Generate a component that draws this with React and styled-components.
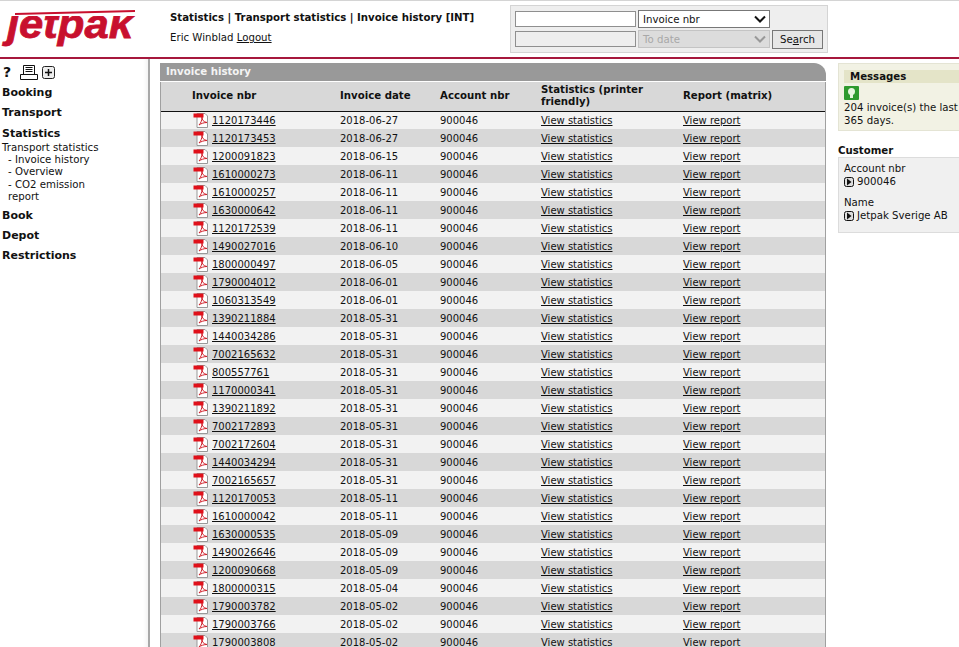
import styled, { createGlobalStyle } from 'styled-components'

const GlobalStyle = createGlobalStyle`
html, body {
  margin: 0;
  padding: 0;
  height: 647px;
  overflow: hidden;
  background: #fff;
}
body {
  font-family: "DejaVu Sans", Verdana, sans-serif;
  font-size: 10px;
  color: #111;
}
a {
  color: #111;
}
`
const Page = styled.div`
  width: 959px;
  height: 647px;
  overflow: hidden;
  display: flex;
  flex-direction: column;
`
const Header = styled.header`
  flex-shrink: 0;
  display: flex;
  box-sizing: border-box;
  border-top: 1px solid #d4d4d4;
  border-bottom: 2px solid #a6183c;
  height: 59px;
`
const LogoBox = styled.div`
  width: 170px;
  flex-shrink: 0;
`
const HeadText = styled.div`
  width: 340px;
  padding-top: 10px;
  box-sizing: border-box;
`
const Crumb = styled.div`
  font-weight: bold;
  font-size: 10.2px;
  line-height: 13px;
`
const UserLine = styled.div`
  margin-top: 7px;
  line-height: 13px;
  font-size: 10.2px;
`
const SearchBox = styled.form`
  margin-top: 4px;
  width: 318px;
  height: 48px;
  box-sizing: border-box;
  background: #eeeeee;
  border: 1px solid #d4d4d4;
  padding: 4px;
  display: grid;
  grid-template-columns: 121px 132px 51px;
  grid-template-rows: 18px 18px;
  column-gap: 2px;
  row-gap: 2px;
  align-items: center;
`
const TextField = styled.input`
  box-sizing: border-box;
  width: 121px;
  height: 16px;
  margin: 0;
  padding: 0 3px;
  border: 1px solid #8f8f8f;
  background: ${p => (p.disabled ? '#eeeeee' : '#fff')};
`
const FakeSelect = styled.div`
  box-sizing: border-box;
  width: 132px;
  height: 18px;
  border: 1px solid ${p => (p.$off ? '#c4c4c4' : '#777')};
  background: ${p => (p.$off ? '#dcdcdc' : '#fff')};
  color: ${p => (p.$off ? '#a8a8a8' : '#111')};
  display: flex;
  align-items: center;
  justify-content: space-between;
  padding: 0 3px 0 4px;
  font-size: 10.2px;
`
const SearchButton = styled.button`
  box-sizing: border-box;
  width: 51px;
  height: 19px;
  margin: 0;
  padding: 0;
  border: 1px solid #777;
  background: #e6e6e6;
  font: inherit;
  font-size: 10.2px;
  color: #111;
  u {
    text-decoration: underline;
  }
`
const Body = styled.div`
  flex: 1;
  display: flex;
  min-height: 0;
`
const Side = styled.nav`
  width: 150px;
  flex-shrink: 0;
  box-sizing: border-box;
  border-right: 2px solid #a8a8a8;
  box-shadow: inset -6px 0 4px -4px #f2f2f2;
  padding: 6px 0 0 2px;
`
const Tools = styled.div`
  display: flex;
  align-items: center;
  height: 15px;
  margin-bottom: 6px;
  gap: 4px;
`
const Help = styled.span`
  font-weight: bold;
  font-size: 14px;
  width: 14px;
  line-height: 15px;
  padding-left: 1px;
  box-sizing: border-box;
`
const NavHead = styled.div`
  font-weight: bold;
  font-size: 11px;
  line-height: 14px;
  margin-bottom: ${p => (p.$gap ? p.$gap : 6)}px;
`
const SubList = styled.div`
  font-size: 10.2px;
  line-height: 12.2px;
  margin: -5px 0 6px;
`
const SubItem = styled.div`
  padding-left: ${p => (p.$plain ? '0' : '6px')};
`
const Main = styled.main`
  width: 666px;
  margin-left: 10px;
  padding-top: 4px;
  flex-shrink: 0;
`
const PanelTitle = styled.div`
  height: 18px;
  background: #999999;
  color: #f4f4f4;
  font-weight: bold;
  font-size: 10.2px;
  line-height: 18px;
  padding-left: 6px;
  border-radius: 0 12px 0 0;
`
const TableWrap = styled.div`
  border-left: 1px solid #a0a0a0;
  border-right: 1px solid #a0a0a0;
  margin-top: 1px;
`
const Table = styled.table`
  width: 664px;
  table-layout: fixed;
  border-collapse: collapse;
  font-size: 10px;
`
const HeadRow = styled.tr`
  height: 29px;
  background: #d8d8d8;
  border-bottom: 1px solid #111;
`
const Th = styled.th`
  box-sizing: border-box;
  width: ${p => p.$w}px;
  text-align: left;
  font-weight: bold;
  font-size: 10.2px;
  line-height: 12px;
  padding: ${p => (p.$first ? '0 0 0 31px' : '0')};
`
const Row = styled.tr`
  height: 18px;
  background: ${p => (p.$even ? '#d8d8d8' : '#f2f2f2')};
`
const Td = styled.td`
  padding: 0;
  white-space: nowrap;
`
const InvoiceCell = styled.div`
  display: flex;
  align-items: center;
  padding-left: 32px;
  gap: 3px;
`
const Right = styled.aside`
  width: 121px;
  margin-left: 12px;
  padding-top: 4px;
  flex-shrink: 0;
`
const MessageBox = styled.div`
  background: #f2f2e4;
  border: 1px solid #e4e4d4;
  border-right: none;
  padding: 6px 0 0 5px;
  height: 68px;
  box-sizing: border-box;
  line-height: 13px;
  font-size: 10.2px;
  overflow: hidden;
  white-space: nowrap;
`
const MessageTitle = styled.div`
  background: #e4e4c8;
  height: 13px;
  line-height: 13px;
  font-weight: bold;
  font-size: 10.2px;
  padding-left: 6px;
`
const Bulb = styled.div`
  height: 14px;
  margin-top: 3px;
  margin-bottom: 1px;
`
const CustomerTitle = styled.div`
  font-weight: bold;
  font-size: 10.2px;
  line-height: 13px;
  margin: 13px 0 0 0;
`
const CustomerBox = styled.div`
  background: #f0f0f0;
  border: 1px solid #dcdcdc;
  border-right: none;
  height: 76px;
  box-sizing: border-box;
  padding: 4px 0 0 5px;
  line-height: 13px;
  font-size: 10.2px;
  white-space: nowrap;
`
const Field = styled.div`
  margin-bottom: 8px;
`
const ValueLine = styled.div`
  display: flex;
  align-items: center;
  gap: 3px;
`

const rows = [
  ['1120173446', '2018-06-27'], ['1120173453', '2018-06-27'], ['1200091823', '2018-06-15'],
  ['1610000273', '2018-06-11'], ['1610000257', '2018-06-11'], ['1630000642', '2018-06-11'],
  ['1120172539', '2018-06-11'], ['1490027016', '2018-06-10'], ['1800000497', '2018-06-05'],
  ['1790004012', '2018-06-01'], ['1060313549', '2018-06-01'], ['1390211884', '2018-05-31'],
  ['1440034286', '2018-05-31'], ['7002165632', '2018-05-31'], ['800557761', '2018-05-31'],
  ['1170000341', '2018-05-31'], ['1390211892', '2018-05-31'], ['7002172893', '2018-05-31'],
  ['7002172604', '2018-05-31'], ['1440034294', '2018-05-31'], ['7002165657', '2018-05-31'],
  ['1120170053', '2018-05-11'], ['1610000042', '2018-05-11'], ['1630000535', '2018-05-09'],
  ['1490026646', '2018-05-09'], ['1200090668', '2018-05-09'], ['1800000315', '2018-05-04'],
  ['1790003782', '2018-05-02'], ['1790003766', '2018-05-02'], ['1790003808', '2018-05-02'],
]

function Logo() {
  return (
    <svg width="140" height="52" viewBox="0 0 140 52">
      <defs>
        <clipPath id="logo-clip">
          <rect x="0" y="15" width="140" height="37" />
        </clipPath>
      </defs>
      <polygon points="15,12 135,9 135,11 15,14" fill="#c8102e" />
      <g clipPath="url(#logo-clip)">
        <text x="7" y="37" fill="#c8102e" stroke="#c8102e" strokeWidth="0.8" fontFamily="Liberation Sans, sans-serif" fontWeight="bold"
          fontStyle="italic" fontSize="41" textLength="126" lengthAdjust="spacingAndGlyphs">jetpak</text>
      </g>
    </svg>
  )
}

function PdfIcon() {
  return (
    <svg width="16" height="16" viewBox="0 0 16 16">
      <path d="M4 1.500h8l2.500 2.500v11.500h-10.500z" fill="#fff" stroke="#999" strokeWidth="1" />
      <rect x="0.500" y="1.500" width="10" height="4" fill="#e0101a" />
      <path d="M6 13c2-2 3-5 3-8 0 3 1.500 5 5 5.500-3 0-6 1-8 2.500z" fill="none" stroke="#d0202a" strokeWidth="1" />
    </svg>
  )
}

function Chevron({ color }) {
  return (
    <svg width="12" height="8" viewBox="0 0 12 8">
      <path d="M1 1.500l5 5 5-5" fill="none" stroke={color} strokeWidth="2" />
    </svg>
  )
}

function PrinterIcon() {
  return (
    <svg width="18" height="15" viewBox="0 0 18 15">
      <path d="M3.500.500h11v9h-11zM5.500 2.500h7M5.500 4.500h7M5.500 6.500h7M.500 9.500h17v5h-17z" fill="none" stroke="#111" />
    </svg>
  )
}

function ExpandIcon() {
  return (
    <svg width="13" height="13" viewBox="0 0 13 13">
      <rect x="0.500" y="0.500" width="12" height="12" rx="2" fill="#eee" stroke="#222" />
      <path d="M6.500 3v7M3 6.500h7" stroke="#111" strokeWidth="1.500" />
    </svg>
  )
}

function BulbIcon() {
  return (
    <svg width="15" height="14" viewBox="0 0 15 14">
      <rect width="15" height="14" rx="1" fill="#2f9a2f" />
      <circle cx="7.500" cy="5.500" r="3.500" fill="#e8f6e0" />
      <rect x="6" y="8" width="3" height="4" fill="#e8f6e0" />
    </svg>
  )
}

function ArrowBox() {
  return (
    <svg width="10" height="10" viewBox="0 0 10 10">
      <rect x="0.500" y="0.500" width="9" height="9" rx="2" fill="#ddd" stroke="#111" />
      <path d="M3 1.500l4.500 3.500-4.500 3.500z" fill="#111" />
    </svg>
  )
}

export default function App() {
  return (
    <Page>
      <GlobalStyle />
      <Header>
        <LogoBox><Logo /></LogoBox>
        <HeadText>
          <Crumb>Statistics | Transport statistics | Invoice history [INT]</Crumb>
          <UserLine>Eric Winblad <a href="#logout">Logout</a></UserLine>
        </HeadText>
        <SearchBox>
          <TextField />
          <FakeSelect>Invoice nbr <Chevron color="#111" /></FakeSelect>
          <span />
          <TextField disabled />
          <FakeSelect $off>To date <Chevron color="#999" /></FakeSelect>
          <SearchButton type="button">Se<u>a</u>rch</SearchButton>
        </SearchBox>
      </Header>
      <Body>
        <Side>
          <Tools>
            <Help>?</Help>
            <PrinterIcon />
            <ExpandIcon />
          </Tools>
          <NavHead>Booking</NavHead>
          <NavHead $gap={7}>Transport</NavHead>
          <NavHead>Statistics</NavHead>
          <SubList>
            <SubItem $plain>Transport statistics</SubItem>
            <SubItem>- Invoice history</SubItem>
            <SubItem>- Overview</SubItem>
            <SubItem>- CO2 emission</SubItem>
            <SubItem>report</SubItem>
          </SubList>
          <NavHead>Book</NavHead>
          <NavHead>Depot</NavHead>
          <NavHead>Restrictions</NavHead>
        </Side>
        <Main>
          <PanelTitle>Invoice history</PanelTitle>
          <TableWrap>
            <Table>
              <thead>
                <HeadRow>
                  <Th $w={179} $first>Invoice nbr</Th>
                  <Th $w={100}>Invoice date</Th>
                  <Th $w={101}>Account nbr</Th>
                  <Th $w={142}>Statistics (printer friendly)</Th>
                  <Th $w={142}>Report (matrix)</Th>
                </HeadRow>
              </thead>
              <tbody>
                {rows.map(([nbr, date], i) => (
                  <Row key={nbr} $even={i % 2 === 1}>
                    <Td>
                      <InvoiceCell>
                        <PdfIcon />
                        <a href="#invoice">{nbr}</a>
                      </InvoiceCell>
                    </Td>
                    <Td>{date}</Td>
                    <Td>900046</Td>
                    <Td><a href="#stats">View statistics</a></Td>
                    <Td><a href="#report">View report</a></Td>
                  </Row>
                ))}
              </tbody>
            </Table>
          </TableWrap>
        </Main>
        <Right>
          <MessageBox>
            <MessageTitle>Messages</MessageTitle>
            <Bulb><BulbIcon /></Bulb>
            204 invoice(s) the last<br />365 days.
          </MessageBox>
          <CustomerTitle>Customer</CustomerTitle>
          <CustomerBox>
            <Field>
              Account nbr
              <ValueLine><ArrowBox /> 900046</ValueLine>
            </Field>
            <Field>
              Name
              <ValueLine><ArrowBox /> Jetpak Sverige AB</ValueLine>
            </Field>
          </CustomerBox>
        </Right>
      </Body>
    </Page>
  )
}
